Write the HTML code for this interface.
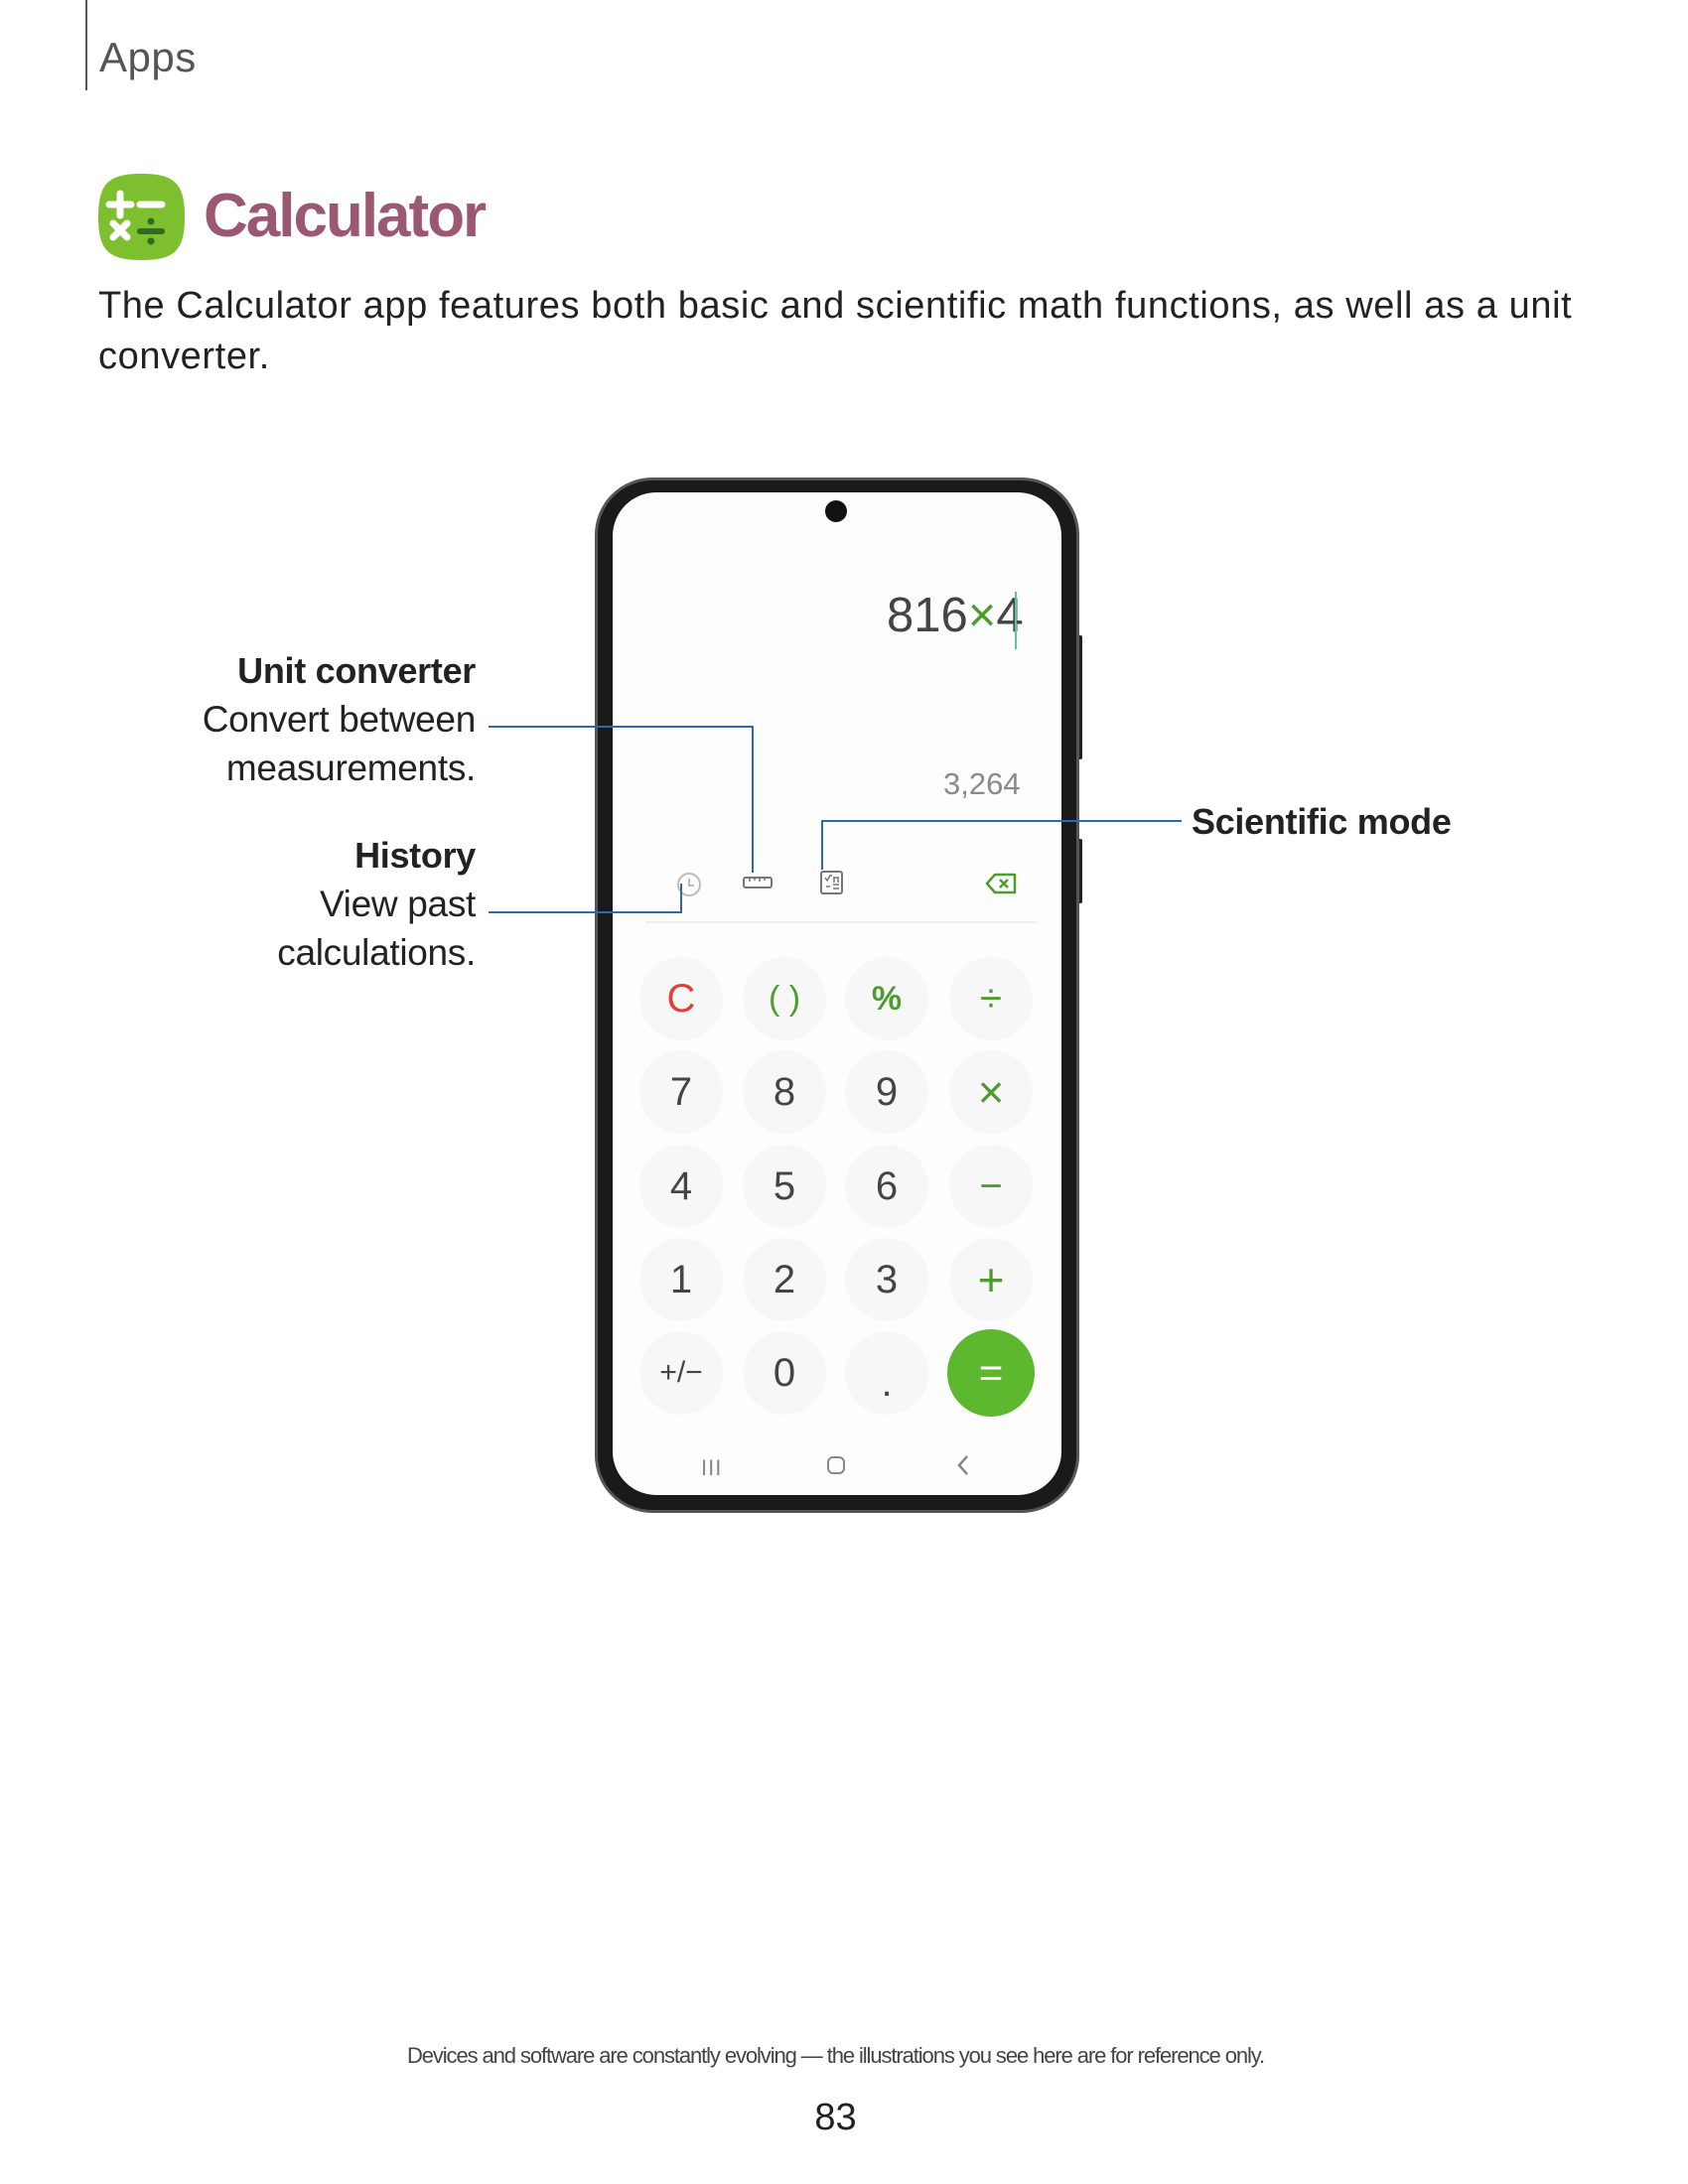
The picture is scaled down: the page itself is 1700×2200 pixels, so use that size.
<!DOCTYPE html>
<html><head><meta charset="utf-8"><style>
*{margin:0;padding:0;box-sizing:border-box}
body{width:1700px;height:2200px;background:#fff;position:relative;font-family:"Liberation Sans",sans-serif;color:#222;overflow:hidden}
.abs{position:absolute}
.lbl{position:absolute;right:1221px;font-size:37px;color:#222;white-space:nowrap;text-align:right;letter-spacing:-0.3px}
.key{position:absolute;width:84px;height:84px;border-radius:50%;background:#f7f7f7;display:flex;align-items:center;justify-content:center;font-size:40px;color:#444}
.g{color:#4b9e2e}
.ln{position:absolute;background:#2f68ab}
</style></head><body>
<div class="abs" style="left:86px;top:0;width:2px;height:91px;background:#555"></div>
<div class="abs" style="left:100px;top:34px;font-size:42px;color:#555;letter-spacing:0.5px">Apps</div>

<svg class="abs" style="left:99px;top:175px" width="87" height="87" viewBox="0 0 87 87">
<path d="M43.5 0C10 0 0 10 0 43.5S10 87 43.5 87 87 77 87 43.5 77 0 43.5 0z" fill="#7dbf2f"/>
<path d="M22 20v22M11 31h22M42 31h22" stroke="#fff" stroke-width="7" stroke-linecap="round"/>
<path d="M15 50l14 14M29 50L15 64" stroke="#fff" stroke-width="7" stroke-linecap="round"/>
<path d="M42 58h22" stroke="#2d6b24" stroke-width="6" stroke-linecap="round"/>
<circle cx="53" cy="48" r="3.5" fill="#2d6b24"/><circle cx="53" cy="68" r="3.5" fill="#2d6b24"/>
</svg>
<div class="abs" style="left:205px;top:182px;font-size:62px;font-weight:bold;color:#9b5872;letter-spacing:-2px">Calculator</div>
<div class="abs" style="left:99px;top:283px;font-size:38px;line-height:51px;width:1580px;color:#222;letter-spacing:0.6px">The Calculator app features both basic and scientific math functions, as well as a unit converter.</div>

<!-- phone -->
<div class="abs" style="left:1084px;top:640px;width:6px;height:125px;background:#222;border-radius:2px"></div>
<div class="abs" style="left:1084px;top:845px;width:6px;height:65px;background:#222;border-radius:2px"></div>
<div class="abs" style="left:599px;top:481px;width:488px;height:1043px;border-radius:58px;background:#1a1a1a;border:3px solid #555"></div>
<div class="abs" style="left:617px;top:496px;width:452px;height:1010px;border-radius:44px;background:#fdfdfd"></div>
<div class="abs" style="left:831px;top:504px;width:22px;height:22px;border-radius:50%;background:#111"></div>

<div class="abs" style="left:893px;top:592px;font-size:49px;color:#444;font-weight:300">816<span class="g">×</span>4</div>
<div class="abs" style="left:1022px;top:596px;width:2px;height:58px;background:#5cc4a0"></div>
<div class="abs" style="left:950px;top:772px;font-size:31px;color:#8a8a8a">3,264</div>

<svg class="abs" style="left:680px;top:877px" width="28" height="28"><circle cx="14" cy="14" r="11" fill="none" stroke="#bbb" stroke-width="2"/><path d="M14 8v7h5" stroke="#bbb" stroke-width="2" fill="none"/></svg>
<svg class="abs" style="left:747px;top:877px" width="36" height="24"><rect x="2" y="7" width="28" height="10" rx="2" fill="none" stroke="#777" stroke-width="2"/><path d="M8 7v4M13 7v3M18 7v4M23 7v3" stroke="#777" stroke-width="1.5"/></svg>
<svg class="abs" style="left:825px;top:876px" width="26" height="26"><rect x="2" y="2" width="21" height="22" rx="2" fill="none" stroke="#777" stroke-width="2"/><path d="M6 8l2 3 3-5h2M14 8h6M15 8v5M19 8v5M7 17h4M14 15h6M14 19h6" stroke="#777" stroke-width="1.5" fill="none"/></svg>
<svg class="abs" style="left:992px;top:877px" width="34" height="26"><path d="M10 4h20v18H10L2 13z" fill="none" stroke="#4b9e2e" stroke-width="2.5" stroke-linejoin="round"/><path d="M15 9l8 8M23 9l-8 8" stroke="#4b9e2e" stroke-width="2.5"/></svg>
<div class="abs" style="left:650px;top:928px;width:395px;height:2px;background:#f0f0f0"></div>

<!-- callout lines -->
<div class="ln" style="left:492px;top:731px;width:267px;height:2px"></div>
<div class="ln" style="left:757px;top:731px;width:2px;height:148px"></div>
<div class="ln" style="left:492px;top:918px;width:195px;height:2px"></div>
<div class="ln" style="left:685px;top:890px;width:2px;height:30px"></div>
<div class="ln" style="left:827px;top:826px;width:363px;height:2px"></div>
<div class="ln" style="left:827px;top:826px;width:2px;height:50px"></div>

<div class="lbl" style="top:655px;font-weight:bold;font-size:36px">Unit converter</div>
<div class="lbl" style="top:704px">Convert between</div>
<div class="lbl" style="top:753px">measurements.</div>
<div class="lbl" style="top:841px;font-weight:bold;font-size:36px">History</div>
<div class="lbl" style="top:890px">View past</div>
<div class="lbl" style="top:939px">calculations.</div>
<div class="abs" style="left:1200px;top:807px;font-size:36px;font-weight:bold;color:#222;letter-spacing:-0.3px">Scientific mode</div>

<!-- keypad -->
<div class="key" style="left:644px;top:964px;color:#e0403a">C</div>
<div class="key g" style="left:748px;top:964px;font-size:34px">( )</div>
<div class="key g" style="left:851px;top:964px;font-size:34px;font-weight:bold">%</div>
<div class="key g" style="left:956px;top:964px">÷</div>
<div class="key" style="left:644px;top:1058px">7</div>
<div class="key" style="left:748px;top:1058px">8</div>
<div class="key" style="left:851px;top:1058px">9</div>
<div class="key g" style="left:956px;top:1058px;font-size:46px">×</div>
<div class="key" style="left:644px;top:1153px">4</div>
<div class="key" style="left:748px;top:1153px">5</div>
<div class="key" style="left:851px;top:1153px">6</div>
<div class="key g" style="left:956px;top:1153px">−</div>
<div class="key" style="left:644px;top:1247px">1</div>
<div class="key" style="left:748px;top:1247px">2</div>
<div class="key" style="left:851px;top:1247px">3</div>
<div class="key g" style="left:956px;top:1247px;font-size:46px">+</div>
<div class="key" style="left:644px;top:1341px;font-size:30px">+/−</div>
<div class="key" style="left:748px;top:1341px">0</div>
<div class="key" style="left:851px;top:1341px"><span style="position:relative;top:10px">.</span></div>
<div class="key" style="left:954px;top:1339px;width:88px;height:88px;background:#5db830;color:#fff;font-size:42px">=</div>

<div class="abs" style="left:706px;top:1466px;font-size:22px;color:#888;letter-spacing:1px">III</div>
<div class="abs" style="left:833px;top:1467px;width:18px;height:18px;border:2.5px solid #888;border-radius:6px"></div>
<svg class="abs" style="left:960px;top:1464px" width="20" height="24"><path d="M14 3l-8 9 8 9" stroke="#888" stroke-width="2.5" fill="none"/></svg>

<div class="abs" style="left:0;width:1683px;top:2058px;text-align:center;font-size:22px;color:#444;letter-spacing:-1.1px">Devices and software are constantly evolving — the illustrations you see here are for reference only.</div>
<div class="abs" style="left:0;width:1683px;top:2112px;text-align:center;font-size:38px;color:#222">83</div>
</body></html>
